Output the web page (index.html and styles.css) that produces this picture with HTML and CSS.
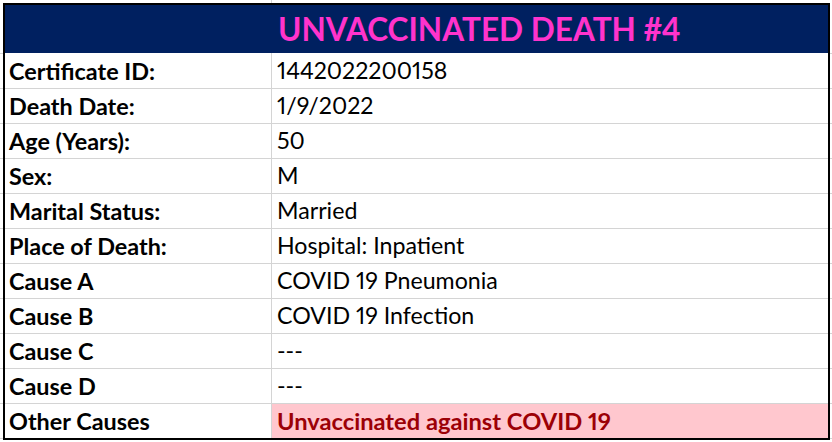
FILE: index.html
```html
<!DOCTYPE html>
<html>
<head>
<meta charset="utf-8">
<link rel="stylesheet" href="styles.css">
</head>
<body>
<div class="sheet">
  <div class="title-row"><div class="spacer"></div><div class="title">UNVACCINATED DEATH #4</div></div>
  <div class="row"><div class="label">Certificate ID:</div><div class="value">1442022200158</div></div>
  <div class="row"><div class="label">Death Date:</div><div class="value">1/9/2022</div></div>
  <div class="row"><div class="label">Age (Years):</div><div class="value">50</div></div>
  <div class="row"><div class="label">Sex:</div><div class="value">M</div></div>
  <div class="row"><div class="label">Marital Status:</div><div class="value">Married</div></div>
  <div class="row"><div class="label">Place of Death:</div><div class="value">Hospital: Inpatient</div></div>
  <div class="row"><div class="label">Cause A</div><div class="value">COVID 19 Pneumonia</div></div>
  <div class="row"><div class="label">Cause B</div><div class="value">COVID 19 Infection</div></div>
  <div class="row"><div class="label">Cause C</div><div class="value">---</div></div>
  <div class="row"><div class="label">Cause D</div><div class="value">---</div></div>
  <div class="row"><div class="label">Other Causes</div><div class="value bad">Unvaccinated against COVID 19</div></div>
</div>
</body>
</html>
```

FILE: styles.css
```css
html, body {
  margin: 0;
  padding: 0;
}
body {
  width: 832px;
  height: 442px;
  overflow: hidden;
  background-color: #ffffff;
  background-image:
    linear-gradient(#d4d4d4, #d4d4d4),
    repeating-linear-gradient(to bottom, transparent 0 34px, #d4d4d4 34px 35px);
  background-size: 1px 3px, 100% 100%;
  background-position: 271px 0, 0 19px;
  background-repeat: no-repeat, repeat;
  font-family: "Lato", "Liberation Sans", sans-serif;
  padding: 3px 0 0 3px;
  box-sizing: border-box;
}
.sheet {
  width: 827px;
  height: 437px;
  box-sizing: border-box;
  border: 2px solid #000;
  background: #fff;
  display: flex;
  flex-direction: column;
}
.title-row {
  height: 48px;
  background: #002060;
  display: grid;
  grid-template-columns: 267px 1fr;
  align-items: center;
}
.title {
  padding-left: 6px;
  padding-top: 2px;
  color: #ff33cc;
  font-weight: 700;
  font-size: 31.6px;
  line-height: 1.2;
  white-space: nowrap;
}
.row {
  height: 35px;
  box-sizing: border-box;
  border-top: 1px solid #d4d4d4;
  display: grid;
  grid-template-columns: 266px 1fr;
}
.title-row + .row {
  border-top: none;
}
.label, .value {
  display: flex;
  align-items: flex-end;
  padding-bottom: 3px;
  font-size: 23.2px;
  line-height: 1.2;
  color: #000;
  white-space: nowrap;
  font-variant-numeric: proportional-nums;
}
.label {
  padding-left: 4px;
  font-weight: 700;
  font-size: 23.4px;
}
.value {
  border-left: 1px solid #d4d4d4;
  padding-left: 5px;
}
.value.bad {
  background: #ffc7ce;
  color: #9c0006;
  font-weight: 700;
  font-size: 23.7px;
}
```
